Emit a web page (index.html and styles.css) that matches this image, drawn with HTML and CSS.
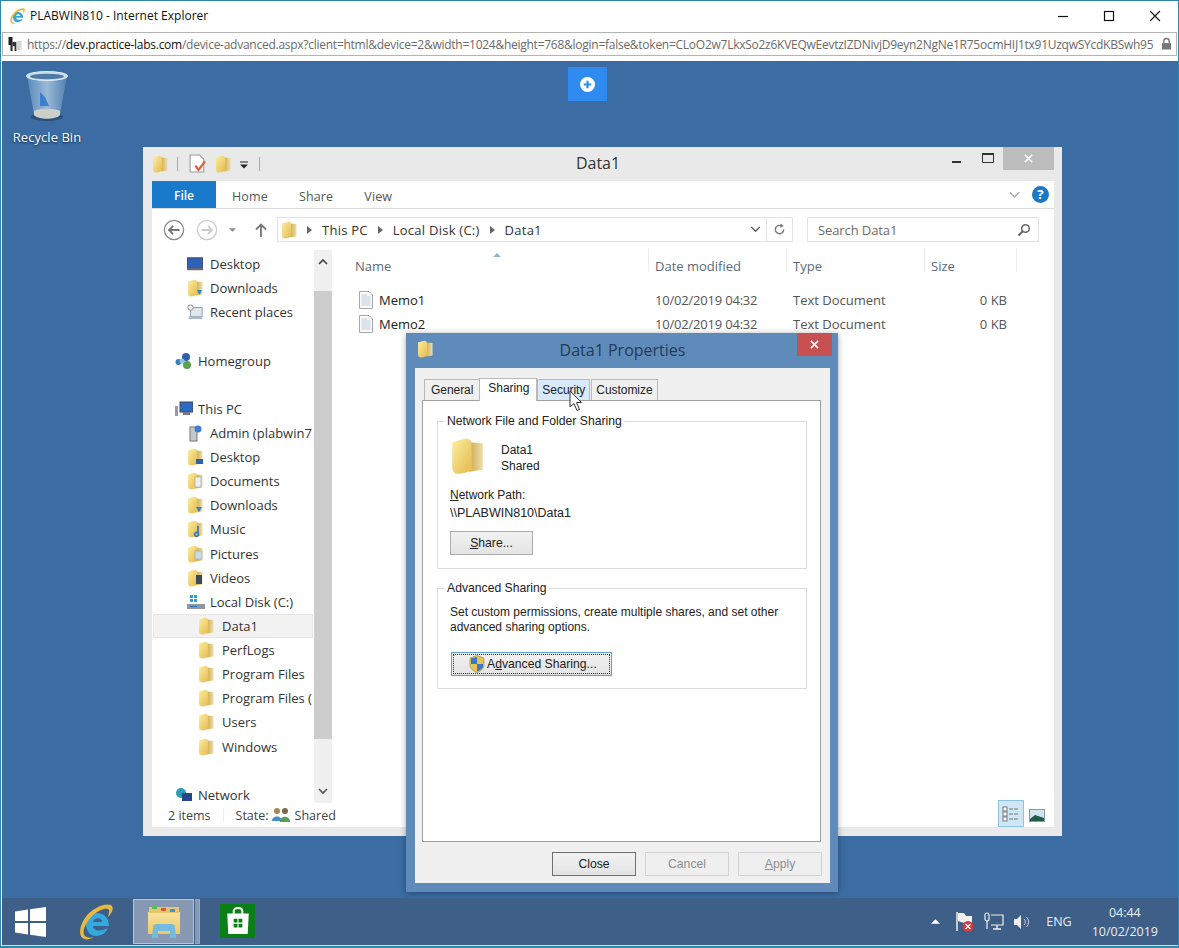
FILE: index.html
```html
<!DOCTYPE html>
<html lang="en">
<head>
<meta charset="utf-8">
<title>PLABWIN810 - Internet Explorer</title>
<link rel="stylesheet" href="styles.css">
</head>
<body>
<svg class="defs" width="0" height="0" aria-hidden="true">
  <defs>
    <linearGradient id="fg" x1="0" y1="0" x2="1" y2="1"><stop offset="0" stop-color="#fdeea0"/><stop offset="1" stop-color="#e3b94c"/></linearGradient>
    <linearGradient id="fr" x1="0" y1="0" x2="1" y2="0"><stop offset="0" stop-color="#cfa94f"/><stop offset="1" stop-color="#ece0ad"/></linearGradient>
    <linearGradient id="bin" x1="0" y1="0" x2="1" y2="0"><stop offset="0" stop-color="#5f8fbf"/><stop offset=".5" stop-color="#a9c8e2"/><stop offset="1" stop-color="#5683b3"/></linearGradient>
    <linearGradient id="tile" x1="0" y1="0" x2="0" y2="1"><stop offset="0" stop-color="#f6e3a0"/><stop offset="1" stop-color="#eec765"/></linearGradient>
    <symbol id="folder" viewBox="0 0 16 18">
      <path d="M9 2.500 15.500 3V15.500L9 16.500Z" fill="url(#fr)"/>
      <path d="M1 2.500 7 .8Q9.500 .5 10 2.500L10.500 15.500Q6 18 2.500 17.300 1 16.500 1 14.500Z" fill="url(#fg)"/>
    </symbol>
    <symbol id="doc" viewBox="0 0 16 18">
      <path d="M1.500 .5H11L14.500 4V17.500H1.500Z" fill="#f8f9fa" stroke="#a3a9ae"/>
      <path d="M3.500 4H9M3.500 6H12.500M3.500 8H12.500M3.500 10H12.500M3.500 12H12.500M3.500 14H12.500" stroke="#c3ced8"/>
    </symbol>
    <symbol id="ie" viewBox="0 0 36 36">
      <path d="M9 20C9 13 14 9 20 9 27 9 32 14 32 22H16C16 27 24 28 31 24 29 29 24 32 19 32 13 32 9 27 9 20ZM16 18H25C25 13 17 13 16 18Z" fill="#35a9dd" fill-rule="evenodd"/>
      <path d="M5.500 34C0 30 4 14 16 6 25 0 34 -1 35.500 3 36.500 6 34 10 31 13 32 9 33 6 31 5 27 4 21 7 16 11 9 18 4 28 8 32 10 34 14 34 17 33 12 36 8 36 5.500 34Z" fill="#e8b93d"/>
    </symbol>
  </defs>
</svg>

<div class="browser">
  <header class="ie-title">
    <svg class="ie-logo"><use href="#ie"/></svg>
    <span class="ie-title-text">PLABWIN810 - Internet Explorer</span>
    <div class="ie-controls">
      <svg class="ctl" viewBox="0 0 12 12"><path d="M1 6.500H11" stroke="#111" stroke-width="1.200"/></svg>
      <svg class="ctl" viewBox="0 0 12 12"><rect x="1.500" y="1.500" width="9" height="9" fill="none" stroke="#111" stroke-width="1.200"/></svg>
      <svg class="ctl" viewBox="0 0 12 12"><path d="M1 1 11 11M11 1 1 11" stroke="#111" stroke-width="1.100"/></svg>
    </div>
  </header>
  <div class="ie-address">
    <svg class="site-icon" viewBox="0 0 14 16"><path d="M1 1H5V15H3V9H1Z" fill="#222"/><path d="M5 6H9V15H7V10H5Z" fill="#333"/><path d="M9 5H14V14H9Z" fill="#d6d6d6"/></svg>
    <div class="url"><span class="url-dim">https://</span><span class="url-host">dev.practice-labs.com</span><span class="url-dim">/device-advanced.aspx?client=html&amp;device=2&amp;width=1024&amp;height=768&amp;login=false&amp;token=CLoO2w7LkxSo2z6KVEQwEevtzIZDNivjD9eyn2NgNe1R75ocmHIJ1tx91UzqwSYcdKBSwh95</span></div>
    <svg class="lock" viewBox="0 0 12 14"><path d="M3 6V4a3 3 0 0 1 6 0v2" fill="none" stroke="#777" stroke-width="1.500"/><rect x="1" y="6" width="10" height="7" fill="#777"/></svg>
  </div>

  <main class="desktop">
    <div class="recycle">
      <svg class="recycle-icon" viewBox="0 0 44 52">
        <ellipse cx="22" cy="47" rx="16" ry="4" fill="#1e3f66" opacity=".6"/>
        <path d="M2 6 9 44C12 49 32 49 35 44L42 6Z" fill="url(#bin)" opacity=".85"/>
        <path d="M9 41C14 38 30 38 35 41L35 45C31 50 13 50 9 45Z" fill="#cfcfca"/>
        <path d="M15 22 20 27 24 36 15 36Z" fill="#3e7fc9"/>
        <ellipse cx="22" cy="6" rx="20.500" ry="4.500" fill="#c5dbea" stroke="#e2edf4"/>
        <ellipse cx="22" cy="6.500" rx="17" ry="2.800" fill="#4f7aa6"/>
      </svg>
      <span>Recycle Bin</span>
    </div>

    <button class="plus-btn" type="button" aria-label="Add">
      <svg viewBox="0 0 14 14" width="15" height="15"><circle cx="7" cy="7" r="7" fill="#fff"/><path d="M7 3.500V10.500M3.500 7H10.500" stroke="#2f8bf0" stroke-width="2"/></svg>
    </button>

    <section class="explorer">
      <div class="ex-title">
        <div class="qat">
          <svg class="i16"><use href="#folder"/></svg>
          <i class="qat-sep"></i>
          <svg class="qat-doc" viewBox="0 0 16 18"><path d="M1 1H10L14 5V17H1Z" fill="#fff" stroke="#999"/><path d="M6 11 9 15 15 7" fill="none" stroke="#e0603a" stroke-width="2.200"/></svg>
          <svg class="i16"><use href="#folder"/></svg>
          <svg class="qat-drop" viewBox="0 0 8 8"><path d="M0 1H8" stroke="#222"/><path d="M0 3.500H8L4 7.500Z" fill="#222"/></svg>
          <i class="qat-sep"></i>
        </div>
        <div class="ex-title-text">Data1</div>
        <div class="ex-controls">
          <svg class="ex-min" viewBox="0 0 10 10"><rect y="7" width="9" height="2" fill="#333"/></svg>
          <svg class="ex-max" viewBox="0 0 12 10"><path d="M.5.500H11.500V9.500H.5Z" fill="none" stroke="#333"/><path d="M0 1H12" stroke="#333" stroke-width="2"/></svg>
          <div class="ex-close"><svg viewBox="0 0 10 10" width="9" height="9"><path d="M1 1 9 9M9 1 1 9" stroke="#fff" stroke-width="1.800"/></svg></div>
        </div>
      </div>

      <div class="ex-body">
        <nav class="ribbon">
          <span class="rib-file">File</span>
          <span class="rib-tab">Home</span>
          <span class="rib-tab">Share</span>
          <span class="rib-tab">View</span>
          <svg class="rib-chev" viewBox="0 0 12 8"><path d="M1 1 6 6 11 1" fill="none" stroke="#aaa" stroke-width="1.600"/></svg>
          <svg class="rib-help" viewBox="0 0 18 18"><circle cx="9" cy="9" r="9" fill="#1a78c8"/><text x="9" y="14" text-anchor="middle" class="help-q">?</text></svg>
        </nav>

        <div class="addr-row">
          <svg class="nav-round" viewBox="0 0 24 24"><circle cx="12" cy="12" r="10.500" fill="none" stroke="#8a8a8a" stroke-width="1.400"/><path d="M18 12H7M11 7.500 6.500 12 11 16.500" fill="none" stroke="#777" stroke-width="2"/></svg>
          <svg class="nav-round" viewBox="0 0 24 24"><circle cx="12" cy="12" r="10.500" fill="none" stroke="#ccc" stroke-width="1.400"/><path d="M6 12H17M13 7.500 17.500 12 13 16.500" fill="none" stroke="#ccc" stroke-width="2"/></svg>
          <svg class="nav-drop" viewBox="0 0 10 6"><path d="M1 1H9L5 5Z" fill="#888"/></svg>
          <svg class="nav-up" viewBox="0 0 12 14"><path d="M6 14V2M1 6.500 6 1.500 11 6.500" fill="none" stroke="#777" stroke-width="1.800"/></svg>
          <div class="crumbs">
            <svg class="i16 crumb-folder"><use href="#folder"/></svg>
            <b class="crumb-arrow"></b><span>This PC</span>
            <b class="crumb-arrow"></b><span>Local Disk (C:)</span>
            <b class="crumb-arrow"></b><span>Data1</span>
            <svg class="crumb-chev" viewBox="0 0 12 8"><path d="M1 1 6 6 11 1" fill="none" stroke="#555" stroke-width="1.500"/></svg>
            <div class="crumb-refresh"><svg viewBox="0 0 14 14" width="13" height="13"><path d="M11.500 7A4.500 4.500 0 1 1 9 3" fill="none" stroke="#777" stroke-width="1.500"/><path d="M8 .5 11.500 3 8 5.500Z" fill="#777"/></svg></div>
          </div>
          <div class="search">
            <span>Search Data1</span>
            <svg viewBox="0 0 14 14" width="14" height="14"><circle cx="8.500" cy="5.500" r="3.800" fill="none" stroke="#666" stroke-width="1.500"/><path d="M6 8 1.500 12.500" stroke="#666" stroke-width="2"/></svg>
          </div>
        </div>

        <div class="ex-main">
          <div class="tree">
            <div class="row l1"><svg class="i16" viewBox="0 0 18 16"><rect x=".5" y="1" width="17" height="11" fill="#2e62b8" stroke="#445"/><rect y="12" width="18" height="3" fill="#667"/></svg>Desktop</div>
            <div class="row l1"><svg class="i16"><use href="#folder"/><path d="M10 11H15L12.500 16Z" fill="#2a86d6"/></svg>Downloads</div>
            <div class="row l1"><svg class="i16" viewBox="0 0 18 18"><rect x="4" y="4" width="13" height="10" fill="#dfe6ec" stroke="#8a99a5"/><circle cx="4" cy="4" r="3" fill="#eee" stroke="#888"/><rect x="2" y="14" width="15" height="3" fill="#aebcc7"/></svg>Recent places</div>
            <div class="gap"></div>
            <div class="row l0"><svg class="i18" viewBox="0 0 18 16"><circle cx="3.500" cy="9" r="3" fill="#3a7ec2"/><circle cx="11" cy="4" r="4" fill="#2f5fae"/><circle cx="12" cy="12" r="4" fill="#5aa24e"/><circle cx="7" cy="8" r="2.500" fill="#8fc2e6"/></svg>Homegroup</div>
            <div class="gap"></div>
            <div class="row l0"><svg class="i18" viewBox="0 0 18 16"><rect x="5" y="1" width="13" height="10" fill="#2c6bc5" stroke="#445"/><rect x="8" y="11" width="7" height="3" fill="#778"/><rect x="0" y="5" width="3" height="10" fill="#99a"/></svg>This PC</div>
            <div class="row l1"><svg class="i16" viewBox="0 0 16 18"><rect x="3" y="3" width="7" height="14" fill="#c4c8cc" stroke="#777"/><circle cx="11" cy="5" r="3.500" fill="#3c7fd0"/></svg>Admin (plabwin7</div>
            <div class="row l1"><svg class="i16"><use href="#folder"/><rect x="9" y="11" width="7" height="5" fill="#2c62aa"/></svg>Desktop</div>
            <div class="row l1"><svg class="i16"><use href="#folder"/><rect x="8" y="5" width="6" height="10" fill="#e7eef4" stroke="#8a99a5" stroke-width=".5"/></svg>Documents</div>
            <div class="row l1"><svg class="i16"><use href="#folder"/><path d="M9 11H15L12 16Z" fill="#2a86d6"/></svg>Downloads</div>
            <div class="row l1"><svg class="i16"><use href="#folder"/><path d="M11 6V13M11 13A2 2 0 1 1 10.900 12.900" fill="none" stroke="#2a72c0" stroke-width="1.600"/></svg>Music</div>
            <div class="row l1"><svg class="i16"><use href="#folder"/><rect x="8" y="6" width="7" height="8" fill="#c9dbe6" stroke="#8a99a5" stroke-width=".5"/></svg>Pictures</div>
            <div class="row l1"><svg class="i16"><use href="#folder"/><rect x="9" y="6" width="6" height="9" fill="#3c4a55"/></svg>Videos</div>
            <div class="row l1"><svg class="i18" viewBox="0 0 18 16"><rect x="3" y="1" width="3" height="3" fill="#2a9fe0"/><rect x="7" y="1" width="3" height="3" fill="#2a9fe0"/><rect x="3" y="5" width="3" height="3" fill="#2a9fe0"/><rect x="7" y="5" width="3" height="3" fill="#2a9fe0"/><rect y="10" width="18" height="5" fill="#8d979f"/><rect x="3" y="12" width="7" height="1" fill="#2f6fb5"/></svg>Local Disk (C:)</div>
            <div class="row l2 selected"><svg class="i16"><use href="#folder"/></svg>Data1</div>
            <div class="row l2"><svg class="i16"><use href="#folder"/></svg>PerfLogs</div>
            <div class="row l2"><svg class="i16"><use href="#folder"/></svg>Program Files</div>
            <div class="row l2"><svg class="i16"><use href="#folder"/></svg>Program Files (</div>
            <div class="row l2"><svg class="i16"><use href="#folder"/></svg>Users</div>
            <div class="row l2"><svg class="i16"><use href="#folder"/></svg>Windows</div>
            <div class="gap"></div>
            <div class="row l0"><svg class="i18" viewBox="0 0 18 16"><circle cx="6" cy="6" r="5" fill="#2a9bb8"/><rect x="7" y="6" width="10" height="8" fill="#25468a"/></svg>Network</div>
          </div>
          <div class="vscroll">
            <svg class="sc-arrow" viewBox="0 0 10 6"><path d="M1 5 5 1 9 5" fill="none" stroke="#444" stroke-width="1.700"/></svg>
            <div class="sc-thumb"></div>
            <svg class="sc-arrow" viewBox="0 0 10 6"><path d="M1 1 5 5 9 1" fill="none" stroke="#555" stroke-width="1.700"/></svg>
          </div>
          <div class="files">
            <div class="sort-caret"></div>
            <div class="f-head">
              <span>Name</span><span>Date modified</span><span>Type</span><span>Size</span>
            </div>
            <div class="f-row"><span class="f-name"><svg class="i16"><use href="#doc"/></svg>Memo1</span><span class="f-date">10/02/2019 04:32</span><span>Text Document</span><span class="f-size">0 KB</span></div>
            <div class="f-row"><span class="f-name"><svg class="i16"><use href="#doc"/></svg>Memo2</span><span class="f-date">10/02/2019 04:32</span><span>Text Document</span><span class="f-size">0 KB</span></div>
          </div>
        </div>

        <footer class="ex-status">
          <span class="st-items">2 items</span>
          <i class="st-sep"></i>
          <span class="st-state">State:</span>
          <svg class="st-users" viewBox="0 0 20 16"><circle cx="6" cy="4" r="3" fill="#a9884e"/><path d="M1 14C1 8 11 8 11 14Z" fill="#3f8ec4"/><circle cx="14" cy="4" r="3" fill="#7b6b45"/><path d="M9 15C9 8 19 8 19 15Z" fill="#5a9e55"/></svg>
          <span>Shared</span>
          <div class="view-btns">
            <div class="view-on"><svg viewBox="0 0 18 16" width="18" height="16"><rect x="1" y="1" width="4" height="4" fill="#fff" stroke="#777"/><rect x="1" y="6" width="4" height="4" fill="#fff" stroke="#777"/><rect x="1" y="11" width="4" height="4" fill="#fff" stroke="#777"/><path d="M7 3H17M7 8H17M7 13H17" stroke="#777" stroke-width="1.200" stroke-dasharray="4 1"/></svg></div>
            <svg class="view-off" viewBox="0 0 16 13"><rect x=".5" y=".5" width="15" height="12" fill="#cfe4ef" stroke="#8a99a5"/><path d="M1 10 6 6 15 9V12H1Z" fill="#1f5a4a"/></svg>
          </div>
        </footer>
      </div>
    </section>

    <section class="dialog">
      <div class="dlg-title">
        <svg class="i16 dlg-icon"><use href="#folder"/></svg>
        <span class="dlg-title-text">Data1 Properties</span>
        <div class="dlg-close"><svg viewBox="0 0 10 10" width="9" height="9"><path d="M1 1 9 9M9 1 1 9" stroke="#fff" stroke-width="1.800"/></svg></div>
      </div>
      <div class="dlg-inner">
        <div class="tabs">
          <span class="tab">General</span>
          <span class="tab active">Sharing</span>
          <span class="tab hover">Security</span>
          <span class="tab">Customize</span>
        </div>
        <div class="panel">
          <fieldset class="group group-net">
            <legend>Network File and Folder Sharing</legend>
            <div class="share-head">
              <svg class="big-folder"><use href="#folder"/></svg>
              <div class="share-lines"><div>Data1</div><div>Shared</div></div>
            </div>
            <div class="path-label"><u>N</u>etwork Path:</div>
            <div class="path-value">\\PLABWIN810\Data1</div>
            <button class="btn btn-share" type="button"><u>S</u>hare...</button>
          </fieldset>
          <fieldset class="group group-adv">
            <legend>Advanced Sharing</legend>
            <p class="adv-text">Set custom permissions, create multiple shares, and set other advanced sharing options.</p>
            <button class="btn btn-adv" type="button">
              <span class="focus-ring">
                <svg class="shield" viewBox="0 0 16 18"><path d="M8 .5 15 3V10C15 14 11 16.500 8 17.500 5 16.500 1 14 1 10V3Z" fill="#e3c455" stroke="#8c8a55" stroke-width=".6"/><path d="M8 2V9H2V3.500ZM8 9H14V12C13 14 10 16 8 16.500Z" fill="#3c78c6"/></svg>
                <span>A<u>d</u>vanced Sharing...</span>
              </span>
            </button>
          </fieldset>
        </div>
        <div class="dlg-actions">
          <button class="btn act" type="button">Close</button>
          <button class="btn act disabled" type="button">Cancel</button>
          <button class="btn act disabled" type="button"><u>A</u>pply</button>
        </div>
      </div>
    </section>

    <svg class="cursor" viewBox="0 0 14 22"><path d="M1 1V17L5 13.500 8 20.500 10.500 19.500 7.500 12.500H12.500Z" fill="#fff" stroke="#333" stroke-width="1"/></svg>
  </main>

  <footer class="taskbar">
    <svg class="start" viewBox="0 0 31 30"><path d="M0 4.500 13 2.500V14H0ZM15 2.200 31 0V14H15ZM0 16H13V27.500L0 25.500ZM15 16H31V30L15 27.800Z" fill="#fff"/></svg>
    <svg class="tb-ie"><use href="#ie"/></svg>
    <div class="tb-explorer">
      <div class="tb-ex-main">
        <svg viewBox="0 0 36 36" width="36" height="36">
          <path d="M2 8H34V30H2Z" fill="url(#tile)"/>
          <path d="M3 3H33V9H3Z" fill="#e9c56a"/>
          <rect x="6" y="2" width="5" height="3" fill="#5fb85f"/><rect x="15" y="4" width="5" height="3" fill="#d9553f"/><rect x="24" y="5" width="5" height="3" fill="#3f93d9"/>
          <path d="M7 24Q7 20 11 20H25Q29 20 29 24L30 34H24V27H12V34H6Z" fill="#74bbe0"/>
        </svg>
      </div>
      <div class="tb-ex-side"></div>
    </div>
    <div class="tb-store">
      <svg viewBox="0 0 24 26" width="26" height="28"><path d="M8 7V4C8 0 16 0 16 4V7" fill="none" stroke="#fff" stroke-width="1.800"/><path d="M2 6H22L21 25H3Z" fill="#fff"/><path d="M8 11H11.500V14.500H8ZM12.500 11H16V14.500H12.500ZM8 15.500H11.500V19H8ZM12.500 15.500H16V19H12.500Z" fill="#0a7f16"/></svg>
    </div>
    <div class="tray">
      <svg class="tray-up" viewBox="0 0 10 5"><path d="M0 5 5 0 10 5Z" fill="#fff"/></svg>
      <svg class="tray-flag" viewBox="0 0 20 20"><path d="M2 0V19" stroke="#eee" stroke-width="1.500"/><path d="M3 1H9L11 4H17V11H9L3 9Z" fill="#f1f1f1"/><circle cx="13" cy="14.500" r="5.500" fill="#cf3b3b"/><path d="M10.500 12 15.500 17M15.500 12 10.500 17" stroke="#fff" stroke-width="1.300"/></svg>
      <svg class="tray-net" viewBox="0 0 20 20"><rect x="1" y="1" width="4" height="8" rx="2" fill="none" stroke="#eee" stroke-width="1.200"/><path d="M3 9V17" stroke="#eee" stroke-width="1.200"/><path d="M7 3H19V13H7" fill="none" stroke="#eee" stroke-width="1.200"/><path d="M13 13V17M9 17H17" stroke="#eee" stroke-width="1.400"/></svg>
      <svg class="tray-vol" viewBox="0 0 18 16"><path d="M1 5H4L8 1V15L4 11H1Z" fill="#eee"/><path d="M11 5A4 4 0 0 1 11 11M13.500 3A7 7 0 0 1 13.500 13" fill="none" stroke="#ccd" stroke-width="1"/></svg>
      <span class="tray-lang">ENG</span>
      <div class="clock"><div>04:44</div><div>10/02/2019</div></div>
    </div>
  </footer>
</div>
</body>
</html>
```

FILE: styles.css
```css
* { box-sizing: border-box; }
html, body { margin: 0; padding: 0; }
body { width: 1179px; height: 948px; overflow: hidden; background: #fff; font-family: "Open Sans", "Noto Sans", sans-serif; color: #222; }
.defs { position: absolute; }
svg { display: block; flex: none; }
.i16 { width: 16px; height: 18px; }
.i18 { width: 18px; height: 16px; }

.browser { width: 1179px; height: 948px; display: flex; flex-direction: column; border: 1px solid #2f86ab; border-width: 1px 1px 2px 1px; }

.ie-title { height: 29px; margin-bottom: 1px; display: flex; align-items: center; padding-left: 8px; background: #fff; flex: none; }
.ie-logo { width: 16px; height: 16px; margin-right: 5px; }
.ie-title-text { font-size: 12px; color: #111; }
.ie-controls { margin-left: auto; display: flex; gap: 34px; padding-right: 17px; }
.ctl { width: 12px; height: 12px; }

.ie-address { height: 24px; margin: 1px 1px 5px 1px; display: flex; align-items: center; border: 1px solid #b4b4b4; background: #fff; padding-left: 4px; flex: none; }
.site-icon { width: 15px; height: 16px; margin-right: 5px; }
.url { flex: 1; min-width: 0; font-size: 12px; letter-spacing: -.26px; white-space: nowrap; overflow: hidden; color: #6a6a6a; }
.url-host { color: #111; }
.lock { width: 11px; height: 14px; margin: 0 4px 0 7px; }

.desktop { flex: 1; position: relative; background: #3b6ca3; margin-left: 1px; min-height: 0; }

.recycle { position: absolute; left: 4px; top: 9px; width: 82px; display: flex; flex-direction: column; align-items: center; color: #fff; font-size: 13px; letter-spacing: .05px; text-shadow: 0 1px 2px #123; }
.recycle-icon { width: 44px; height: 52px; margin-bottom: 6px; }

.plus-btn { position: absolute; left: 566px; top: 6px; width: 39px; height: 34px; border: 0; padding: 0; background: #2f8bf0; display: flex; align-items: center; justify-content: center; }

.explorer { position: absolute; left: 141px; top: 86px; width: 919px; height: 689px; background: #e9e9e9; padding: 0 8px 9px 9px; display: flex; flex-direction: column; }
.ex-title { height: 34px; display: flex; align-items: flex-start; position: relative; flex: none; }
.qat { display: flex; align-items: center; padding-top: 7px; height: 26px; }
.qat-doc { width: 17px; height: 19px; margin-right: 9px; }
.qat-sep { width: 1px; height: 14px; background: #aaa; margin: 0 11px 0 9px; }
.qat-sep:last-child { margin: 0 0 0 11px; }
.qat-drop { width: 8px; height: 8px; margin-left: 9px; margin-top: 3px; }
.ex-title-text { position: absolute; left: 0; right: 10px; text-align: center; top: 5px; font-size: 16px; color: #333; }
.ex-controls { margin-left: auto; display: flex; position: relative; align-items: flex-start; }
.ex-min { width: 10px; height: 10px; margin: 7px 20px 0 0; }
.ex-max { width: 12px; height: 10px; margin: 6px 9px 0 0; }
.ex-close { width: 51px; height: 23px; background: #bcbcbc; display: flex; align-items: center; justify-content: center; }

.ex-body { flex: 1; min-height: 0; background: #fff; display: flex; flex-direction: column; }
.ribbon { height: 28px; flex: none; display: flex; align-items: center; border-bottom: 1px solid #dadada; font-size: 12.500px; color: #555; padding-right: 5px; }
.rib-file { width: 64px; height: 27px; background: #1979ca; color: #fff; display: flex; align-items: center; justify-content: center; font-weight: 600; font-size: 12px; padding-top: 1px; }
.rib-tab { letter-spacing: .15px; padding-top: 3px; }
.rib-file + .rib-tab { margin-left: 16px; }
.rib-tab + .rib-tab { margin-left: 31px; }
.rib-chev { width: 11px; height: 8px; margin-left: auto; margin-right: 12px; }
.rib-help { width: 17px; height: 17px; }
.help-q { fill: #fff; font: 700 14px "Open Sans", sans-serif; }

.addr-row { height: 41px; flex: none; display: flex; align-items: center; padding-left: 11px; }
.nav-round { width: 22px; height: 22px; margin-right: 11px; }
.nav-drop { width: 9px; height: 6px; margin: 0 18px 0 -1px; }
.nav-up { width: 12px; height: 14px; margin-right: 10px; }
.crumbs { width: 516px; height: 25px; border: 1px solid #e2e2e2; display: flex; align-items: center; padding-left: 3px; font-size: 13px; letter-spacing: .25px; color: #333; }
.crumb-folder { margin-right: 10px; }
.crumb-arrow { width: 0; height: 0; border-left: 5px solid #666; border-top: 4px solid transparent; border-bottom: 4px solid transparent; margin: 0 10px 0 0; }
.crumbs span + .crumb-arrow { margin-left: 10px; }
.crumb-chev { width: 11px; height: 7px; margin-left: auto; margin-right: 5px; }
.crumb-refresh { width: 26px; height: 23px; border-left: 1px solid #e2e2e2; display: flex; align-items: center; justify-content: center; }
.search { width: 232px; height: 25px; margin-left: 14px; border: 1px solid #e2e2e2; display: flex; align-items: center; justify-content: space-between; padding: 0 7px 0 10px; font-size: 13px; letter-spacing: -.1px; color: #6d6d6d; }

.ex-main { flex: 1; min-height: 0; display: flex; }
.tree { width: 162px; flex: none; overflow: hidden; padding-top: 2px; font-size: 13px; color: #333; }
.row { height: 24.130px; display: flex; align-items: center; white-space: nowrap; overflow: hidden; }
.gap { height: 24.130px; }
.l0 { padding-left: 23px; gap: 5px; }
.l1 { padding-left: 35px; gap: 7px; }
.l1 .i18 { margin-right: -2px; }
.l2 { padding-left: 46px; gap: 8px; }
.selected { background: #f2f2f2; border: 1px solid #e5e5e5; margin: 0 1px; padding-left: 44px; }
.vscroll { width: 18px; flex: none; background: #f0f0f0; display: flex; flex-direction: column; align-items: center; justify-content: space-between; padding: 9px 0; position: relative; }
.sc-arrow { width: 10px; height: 6px; }
.sc-thumb { position: absolute; left: 0; right: 0; top: 41px; height: 448px; background: #cdcdcd; }

.files { flex: 1; min-width: 0; padding-left: 23px; position: relative; font-size: 13px; color: #555; }
.sort-caret { position: absolute; left: 161px; top: 3px; width: 0; height: 0; border-left: 4px solid transparent; border-right: 4px solid transparent; border-bottom: 4px solid #8cb4d4; }
.f-head, .f-row { display: grid; grid-template-columns: 300px 138px 138px 76px; align-items: center; }
.f-head { height: 38px; padding-bottom: 6px; color: #5a6a7a; }
.f-head span { position: relative; }
.f-head span + span::before { content: ""; position: absolute; left: -7px; top: -9px; height: 24px; width: 1px; background: #ececec; }
.f-head span:last-child::after { content: ""; position: absolute; left: 85px; top: -9px; height: 24px; width: 1px; background: #ececec; }
.f-row { height: 24.130px; }
.f-name { display: flex; align-items: center; gap: 5px; color: #222; padding-left: 3px; }
.f-date { letter-spacing: -.2px; }
.f-size { text-align: right; }

.ex-status { height: 24px; flex: none; display: flex; align-items: center; padding-left: 16px; font-size: 12.500px; color: #444; }
.st-sep { width: 1px; height: 14px; background: #eee; margin: 0 12px; }
.st-state { margin-right: 2px; }
.st-users { width: 20px; height: 16px; margin-right: 4px; }
.view-btns { margin-left: auto; display: flex; align-items: center; gap: 5px; padding-right: 9px; }
.view-on { width: 26px; height: 27px; background: #cfe6f5; border: 1px solid #8cc4e4; display: flex; align-items: center; justify-content: center; margin-top: -3px; }
.view-off { width: 16px; height: 13px; }

.dialog { position: absolute; left: 404px; top: 272px; width: 432px; height: 559px; background: #5f8bbb; padding: 0 8px 9px 9px; display: flex; flex-direction: column; box-shadow: 0 1px 6px rgba(0, 0, 0, .35); }
.dlg-title { height: 35px; flex: none; display: flex; align-items: flex-start; position: relative; }
.dlg-icon { margin-top: 7px; margin-left: 2px; }
.dlg-title-text { position: absolute; left: 0; right: 0; text-align: center; top: 6px; font-size: 16px; color: #243a55; }
.dlg-close { margin-left: auto; margin-right: -2px; width: 35px; height: 23px; background: #c75050; display: flex; align-items: center; justify-content: center; }

.dlg-inner { flex: 1; min-height: 0; background: #f0f0f0; padding: 0 9px 8px 7px; display: flex; flex-direction: column; font-family: "Liberation Sans", Arial, sans-serif; font-size: 12px; color: #222; }
.tabs { display: flex; height: 32px; padding: 9px 0 0 3px; flex: none; align-items: flex-end; position: relative; }
.tab { height: 21px; padding: 0 6px; border: 1px solid #b9b9b9; border-bottom: 0; background: #f0f0f0; display: flex; align-items: center; margin-left: -1px; font-size: 12px; letter-spacing: -.05px; }
.tab.active { height: 23px; background: #fff; padding: 0 7px 4px 8px; margin-bottom: -1px; position: relative; }
.tab.hover { background: #d8eaf9; margin-left: 0; padding: 0 4px 0 4px; }
.tab.hover + .tab { margin-left: 1px; padding: 0 4px 0 4px; }
.panel { height: 442px; flex: none; background: #fff; border: 1px solid #a0a0a0; padding: 13px 13px 0 14px; display: flex; flex-direction: column; }
.group { margin: 0; padding: 0 12px; border: 1px solid #dcdcdc; min-width: 0; }
.group legend { padding: 0 2px; margin-left: -5px; font-size: 12.200px; color: #222; line-height: 15px; }
.group-net { height: 155px; }
.group-adv { height: 108px; margin-top: 12px; }
.share-head { display: flex; align-items: flex-start; margin-top: 8px; }
.big-folder { width: 34px; height: 38px; margin-right: 17px; }
.share-lines { font-size: 12px; line-height: 16px; padding-top: 5px; }
.path-label { margin-top: 12px; font-size: 12px; line-height: 17px; }
.path-value { font-size: 12.500px; line-height: 19px; }
.btn { font-family: inherit; font-size: 12.200px; height: 24px; background: linear-gradient(#f2f2f2, #e3e3e3); border: 1px solid #acacac; color: #222; padding: 0; display: flex; align-items: center; justify-content: center; }
.btn-share { width: 83px; margin-top: 8px; }
.adv-text { margin: 9px 0 0 0; width: 350px; font-size: 12px; line-height: 15px; }
.btn-adv { width: 161px; height: 24px; margin: 17px 0 0 1px; border-color: #5f9fd8; padding: 1px; }
.focus-ring { width: 100%; height: 100%; border: 1px dotted #333; display: flex; align-items: center; padding-left: 15px; gap: 2px; }
.shield { width: 16px; height: 18px; }
.dlg-actions { display: flex; justify-content: flex-end; gap: 9px; margin-top: 10px; margin-right: -1px; flex: none; }
.act { width: 84px; border-color: #707070; }
.act.disabled { color: #8d8d8d; border-color: #d3d3d3; background: #efefef; }

.cursor { position: absolute; left: 567px; top: 329px; width: 14px; height: 22px; }

.taskbar { height: 48px; flex: none; background: #3e5f87; margin-left: 1px; display: flex; align-items: center; border-bottom: 1px solid #c9dfe8; position: relative; }
.start { width: 31px; height: 30px; margin-left: 13px; }
.tb-ie { width: 36px; height: 36px; margin-left: 31px; }
.tb-explorer { display: flex; height: 47px; margin-left: 19px; padding: 1px 0; }
.tb-ex-main { width: 61px; background: #8698b2; border: 1px solid #b6c3d2; display: flex; align-items: center; justify-content: center; margin-left: 1px; }
.tb-ex-side { width: 5px; background: #8698b2; border: 1px solid #97a8bc; border-left: 0; margin-left: 1px; }
.tb-store { width: 35px; height: 34px; background: #0a7f16; margin: -2px 0 0 20px; display: flex; align-items: center; justify-content: center; }
.tray { margin-left: auto; display: flex; align-items: center; color: #e9eef4; font-size: 12.500px; padding-right: 20px; }
.tray-up { width: 9px; height: 5px; margin-right: 15px; }
.tray-flag { width: 20px; height: 20px; margin-right: 9px; }
.tray-net { width: 20px; height: 20px; margin-right: 9px; }
.tray-vol { width: 18px; height: 16px; margin-right: 15px; }
.tray-lang { margin-right: 20px; }
.clock { text-align: center; line-height: 19px; }
```
